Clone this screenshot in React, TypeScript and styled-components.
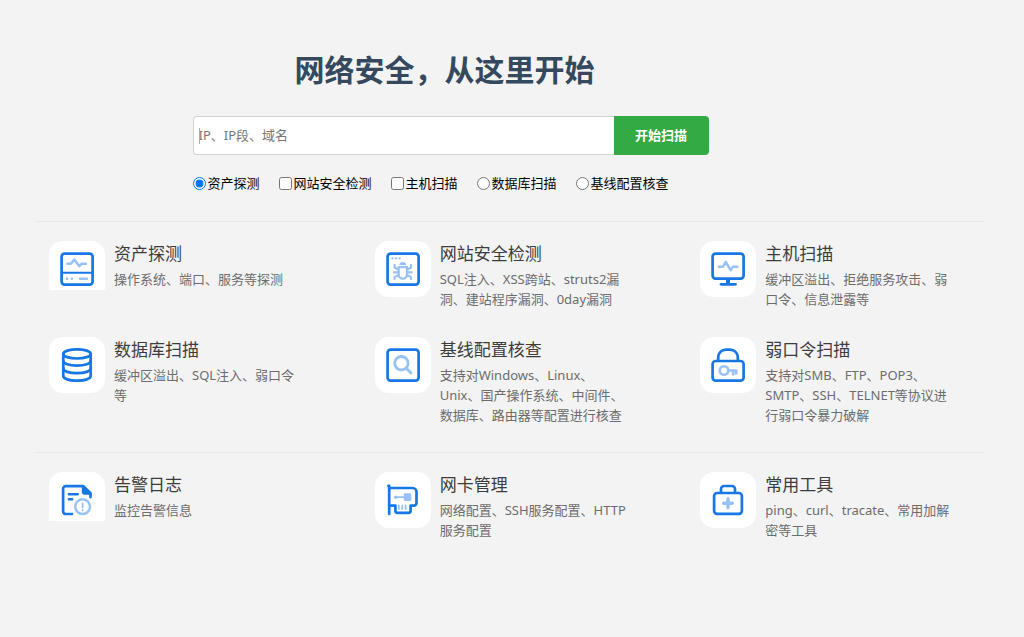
import React from 'react';
import styled, { createGlobalStyle } from 'styled-components';

const GlobalStyle = createGlobalStyle`
  * { box-sizing: border-box; }
  body {
    margin: 0;
    background: #f3f3f3;
    color: #000;
    font-family: "Noto Sans", "Noto Sans CJK SC", sans-serif;
    font-size: 13px;
    line-height: 20px;
  }
`;

const BLUE = '#1677e5';
const LIGHT = '#96c2f7';

const Page = styled.main`
  padding: 49px 40px 40px 35px;
`;

const Hero = styled.form`
  width: 100%;
  max-width: 516px;
  margin: 0 auto 28px;
  display: flex;
  flex-direction: column;
`;

const HeroArea = styled.header`
  padding-right: 118px;
`;

const Title = styled.h1`
  margin: 0 12px 25px 0;
  text-align: center;
  font-size: 30px;
  line-height: 42px;
  font-weight: 700;
  color: #34495e;
`;

const SearchBar = styled.div`
  display: flex;
  height: 39px;
`;

const Field = styled.div`
  position: relative;
  flex: 1;
  display: flex;

  &::before {
    content: '';
    position: absolute;
    left: 6px;
    top: 12px;
    width: 1px;
    height: 16px;
    background: #aaa;
  }
`;

const SearchInput = styled.input`
  flex: 1;
  min-width: 0;
  padding: 0 5px 1px;
  border: 1px solid #d2d2d2;
  border-right: 0;
  border-radius: 4px 0 0 4px;
  background: #fff;
  font: inherit;
  outline: none;

  &::placeholder { color: #757575; opacity: 1; }
`;

const ScanButton = styled.button`
  width: 95px;
  padding: 0 0 1px;
  border: 0;
  border-radius: 0 4px 4px 0;
  background: #33aa44;
  color: #fff;
  font: inherit;
  font-weight: 700;
  cursor: pointer;
`;

const Options = styled.div`
  display: flex;
  flex-wrap: wrap;
  gap: 19px;
  margin-top: 18px;
`;

const Option = styled.label`
  display: flex;
  align-items: center;
  gap: 2px;
  white-space: nowrap;

  input { width: 13px; height: 13px; margin: 0; }
`;

const Section = styled.section`
  display: grid;
  grid-template-columns: repeat(3, 1fr);
  gap: 28px 42px;
  padding: 19px 0 27px 14px;
  border-top: 1px solid #e8e8e8;
`;

const Feature = styled.article`
  display: flex;
  align-items: flex-start;
  gap: 9px;
  padding-right: 26px;
`;

const Tile = styled.div<{ $short?: boolean }>`
  flex: none;
  width: 56px;
  height: ${(p) => (p.$short ? 49 : 56)}px;
  padding: 11px;
  border-radius: ${(p) => (p.$short ? '14px 14px 0 0' : '14px')};
  background: #fff;

  svg { display: block; }
`;

const FeatureText = styled.div`
  flex: 1;
  min-width: 0;
`;

const FeatureTitle = styled.h2`
  margin: 0 0 3px;
  font-size: 17px;
  line-height: 25px;
  font-weight: 400;
  color: #3c3c3c;
`;

const FeatureDesc = styled.p`
  margin: 0;
  color: #6c6c6c;
`;

const Icon = ({ children }: { children: React.ReactNode }) => (
  <svg
    width="34"
    height="34"
    viewBox="0 0 34 34"
    fill="none"
    stroke={BLUE}
    strokeWidth="2.7"
    strokeLinecap="round"
    strokeLinejoin="round"
    aria-hidden="true"
  >
    {children}
  </svg>
);

const AssetIcon = () => (
  <Icon>
    <rect x="1.6" y="1.6" width="31" height="31" rx="3" />
    <path d="M1.6 20.8h31" strokeWidth="2" />
    <g stroke={LIGHT} strokeWidth="2.5">
      <path d="M7.5 11.8h3.5L14.3 7.5l5 6.6 2.2-2.3h4.5" />
      <path d="M7 26.8h.1M11.8 26.8h.1M20 26.8h7" />
    </g>
  </Icon>
);

const BugIcon = () => (
  <Icon>
    <rect x="1.6" y="1.6" width="31" height="31" rx="3" />
    <g stroke={LIGHT} strokeWidth="2.3">
      <path d="M6.4 6.4h.1M10 6.4h.1M13.6 6.4h.1" />
      <path d="M12.6 15.2h8.4v7.3a4.2 4.2 0 0 1-8.4 0z" />
      <path d="M14 12.4a2.9 2.2 0 0 1 5.6 0z" fill={LIGHT} strokeWidth="1.4" />
      <path d="M8.6 13.2v2.2l3.5 2M25 13.2v2.2l-3.5 2M8 20.3h4.2M21.4 20.3h4.2M8.6 27v-2l3.8-1.7M25 27v-2l-3.8-1.7" />
    </g>
  </Icon>
);

const MonitorIcon = () => (
  <Icon>
    <rect x="1.6" y="1.6" width="31" height="25" rx="3" />
    <path d="M17 27v5" strokeWidth="4" strokeLinecap="butt" />
    <path d="M10 32.3h14.5" />
    <path d="M7.8 14.8h4l3-5 4.8 8.4 2.2-3.4h4.6" stroke={LIGHT} strokeWidth="2.4" />
  </Icon>
);

const DatabaseIcon = () => (
  <Icon>
    <ellipse cx="17" cy="5.9" rx="13.7" ry="4.6" />
    <path d="M3.3 6v22c0 2.7 6 4.7 13.7 4.7s13.7-2 13.7-4.7V6" />
    <path d="M3.3 13c0 2.6 6 4.6 13.7 4.6s13.7-2 13.7-4.6M3.3 20.6c0 2.6 6 4.6 13.7 4.6s13.7-2 13.7-4.6" />
  </Icon>
);

const SearchIcon = () => (
  <Icon>
    <rect x="1.6" y="1.6" width="31" height="31" rx="3" />
    <g stroke={LIGHT} strokeWidth="2.8">
      <circle cx="15.4" cy="15.2" r="6.7" />
      <path d="M20.3 20.2l4.7 4.8" />
    </g>
  </Icon>
);

const LockIcon = () => (
  <Icon>
    <rect x="1.6" y="13" width="31" height="19.6" rx="3" />
    <path d="M7.2 12.5V9.3a7.7 7.7 0 0 1 7.7-7.7h4.2a7.7 7.7 0 0 1 7.7 7.7v3.2" />
    <g stroke={LIGHT} strokeWidth="2.6" strokeLinecap="butt">
      <circle cx="13" cy="22.5" r="4.3" />
      <path d="M17 22.5h9.4M22.2 22.5v5M25.2 22.5v4" />
    </g>
  </Icon>
);

const LogIcon = () => (
  <Icon>
    <path d="M12 31H5.8a2.7 2.7 0 0 1-2.7-2.7V5.8a2.7 2.7 0 0 1 2.7-2.7h17.5l7.2 7v4" />
    <path d="M22.8 3.5v5.2a2 2 0 0 0 2 2h5.6z" fill={BLUE} strokeWidth="2" />
    <path d="M8.8 11.2h9M8.8 16.2h3.4" strokeWidth="2.4" />
    <g stroke={LIGHT} strokeWidth="2.4">
      <circle cx="22.6" cy="23.6" r="7.4" />
      <path d="M22.6 20.4v4.1M22.6 27.2v.1" strokeWidth="1.8" />
    </g>
  </Icon>
);

const NetCardIcon = () => (
  <Icon>
    <path d="M2.4 2.9h.8v28" />
    <path d="M3.2 5h23.3a4 4 0 0 1 4 4v11a2.7 2.7 0 0 1-2.7 2.7h-3.2v5.1a2 2 0 0 1-2 2H11.4a2 2 0 0 1-2-2v-5.1H3.2" />
    <g stroke={LIGHT} strokeWidth="1.8">
      <path d="M9.2 14.2h9M12.8 22.5v3.4M16.2 22.5v3.4M19.6 22.5v3.4" />
      <circle cx="9.8" cy="14.2" r=".9" />
      <rect x="18.6" y="11.2" width="5.8" height="5.8" rx=".5" fill={LIGHT} />
    </g>
  </Icon>
);

const ToolkitIcon = () => (
  <Icon>
    <rect x="3.1" y="10" width="27.8" height="20.8" rx="3" />
    <path d="M10 9.5V6a3 3 0 0 1 3-3h8a3 3 0 0 1 3 3v3.5" />
    <path d="M17 16v8.6M12.7 20.3h8.6" stroke={LIGHT} strokeWidth="3.4" />
  </Icon>
);

interface FeatureData {
  title: string;
  desc: string;
  icon: React.ReactNode;
  short?: boolean;
}

const scans: FeatureData[] = [
  { title: '资产探测', desc: '操作系统、端口、服务等探测', icon: <AssetIcon />, short: true },
  { title: '网站安全检测', desc: 'SQL注入、XSS跨站、struts2漏洞、建站程序漏洞、0day漏洞', icon: <BugIcon /> },
  { title: '主机扫描', desc: '缓冲区溢出、拒绝服务攻击、弱口令、信息泄露等', icon: <MonitorIcon /> },
  { title: '数据库扫描', desc: '缓冲区溢出、SQL注入、弱口令等', icon: <DatabaseIcon /> },
  { title: '基线配置核查', desc: '支持对Windows、Linux、Unix、国产操作系统、中间件、数据库、路由器等配置进行核查', icon: <SearchIcon /> },
  { title: '弱口令扫描', desc: '支持对SMB、FTP、POP3、SMTP、SSH、TELNET等协议进行弱口令暴力破解', icon: <LockIcon /> },
];

const tools: FeatureData[] = [
  { title: '告警日志', desc: '监控告警信息', icon: <LogIcon />, short: true },
  { title: '网卡管理', desc: '网络配置、SSH服务配置、HTTP服务配置', icon: <NetCardIcon /> },
  { title: '常用工具', desc: 'ping、curl、tracate、常用加解密等工具', icon: <ToolkitIcon /> },
];

const options = [
  { label: '资产探测', type: 'radio', checked: true },
  { label: '网站安全检测', type: 'checkbox' },
  { label: '主机扫描', type: 'checkbox' },
  { label: '数据库扫描', type: 'radio' },
  { label: '基线配置核查', type: 'radio' },
];

const FeatureGrid = ({ items }: { items: FeatureData[] }) => (
  <Section>
    {items.map((f) => (
      <Feature key={f.title}>
        <Tile $short={f.short}>{f.icon}</Tile>
        <FeatureText>
          <FeatureTitle>{f.title}</FeatureTitle>
          <FeatureDesc>{f.desc}</FeatureDesc>
        </FeatureText>
      </Feature>
    ))}
  </Section>
);

export default function App() {
  return (
    <>
      <GlobalStyle />
      <Page lang="zh-CN">
        <HeroArea>
          <Hero onSubmit={(e) => e.preventDefault()}>
            <Title>网络安全，从这里开始</Title>
            <SearchBar>
              <Field>
                <SearchInput type="text" aria-label="IP、IP段、域名" placeholder="IP、IP段、域名" />
              </Field>
              <ScanButton type="submit">开始扫描</ScanButton>
            </SearchBar>
            <Options>
              {options.map((o) => (
                <Option key={o.label}>
                  <input type={o.type} name="scan" defaultChecked={o.checked} />
                  {o.label}
                </Option>
              ))}
            </Options>
          </Hero>
        </HeroArea>
        <FeatureGrid items={scans} />
        <FeatureGrid items={tools} />
      </Page>
    </>
  );
}
